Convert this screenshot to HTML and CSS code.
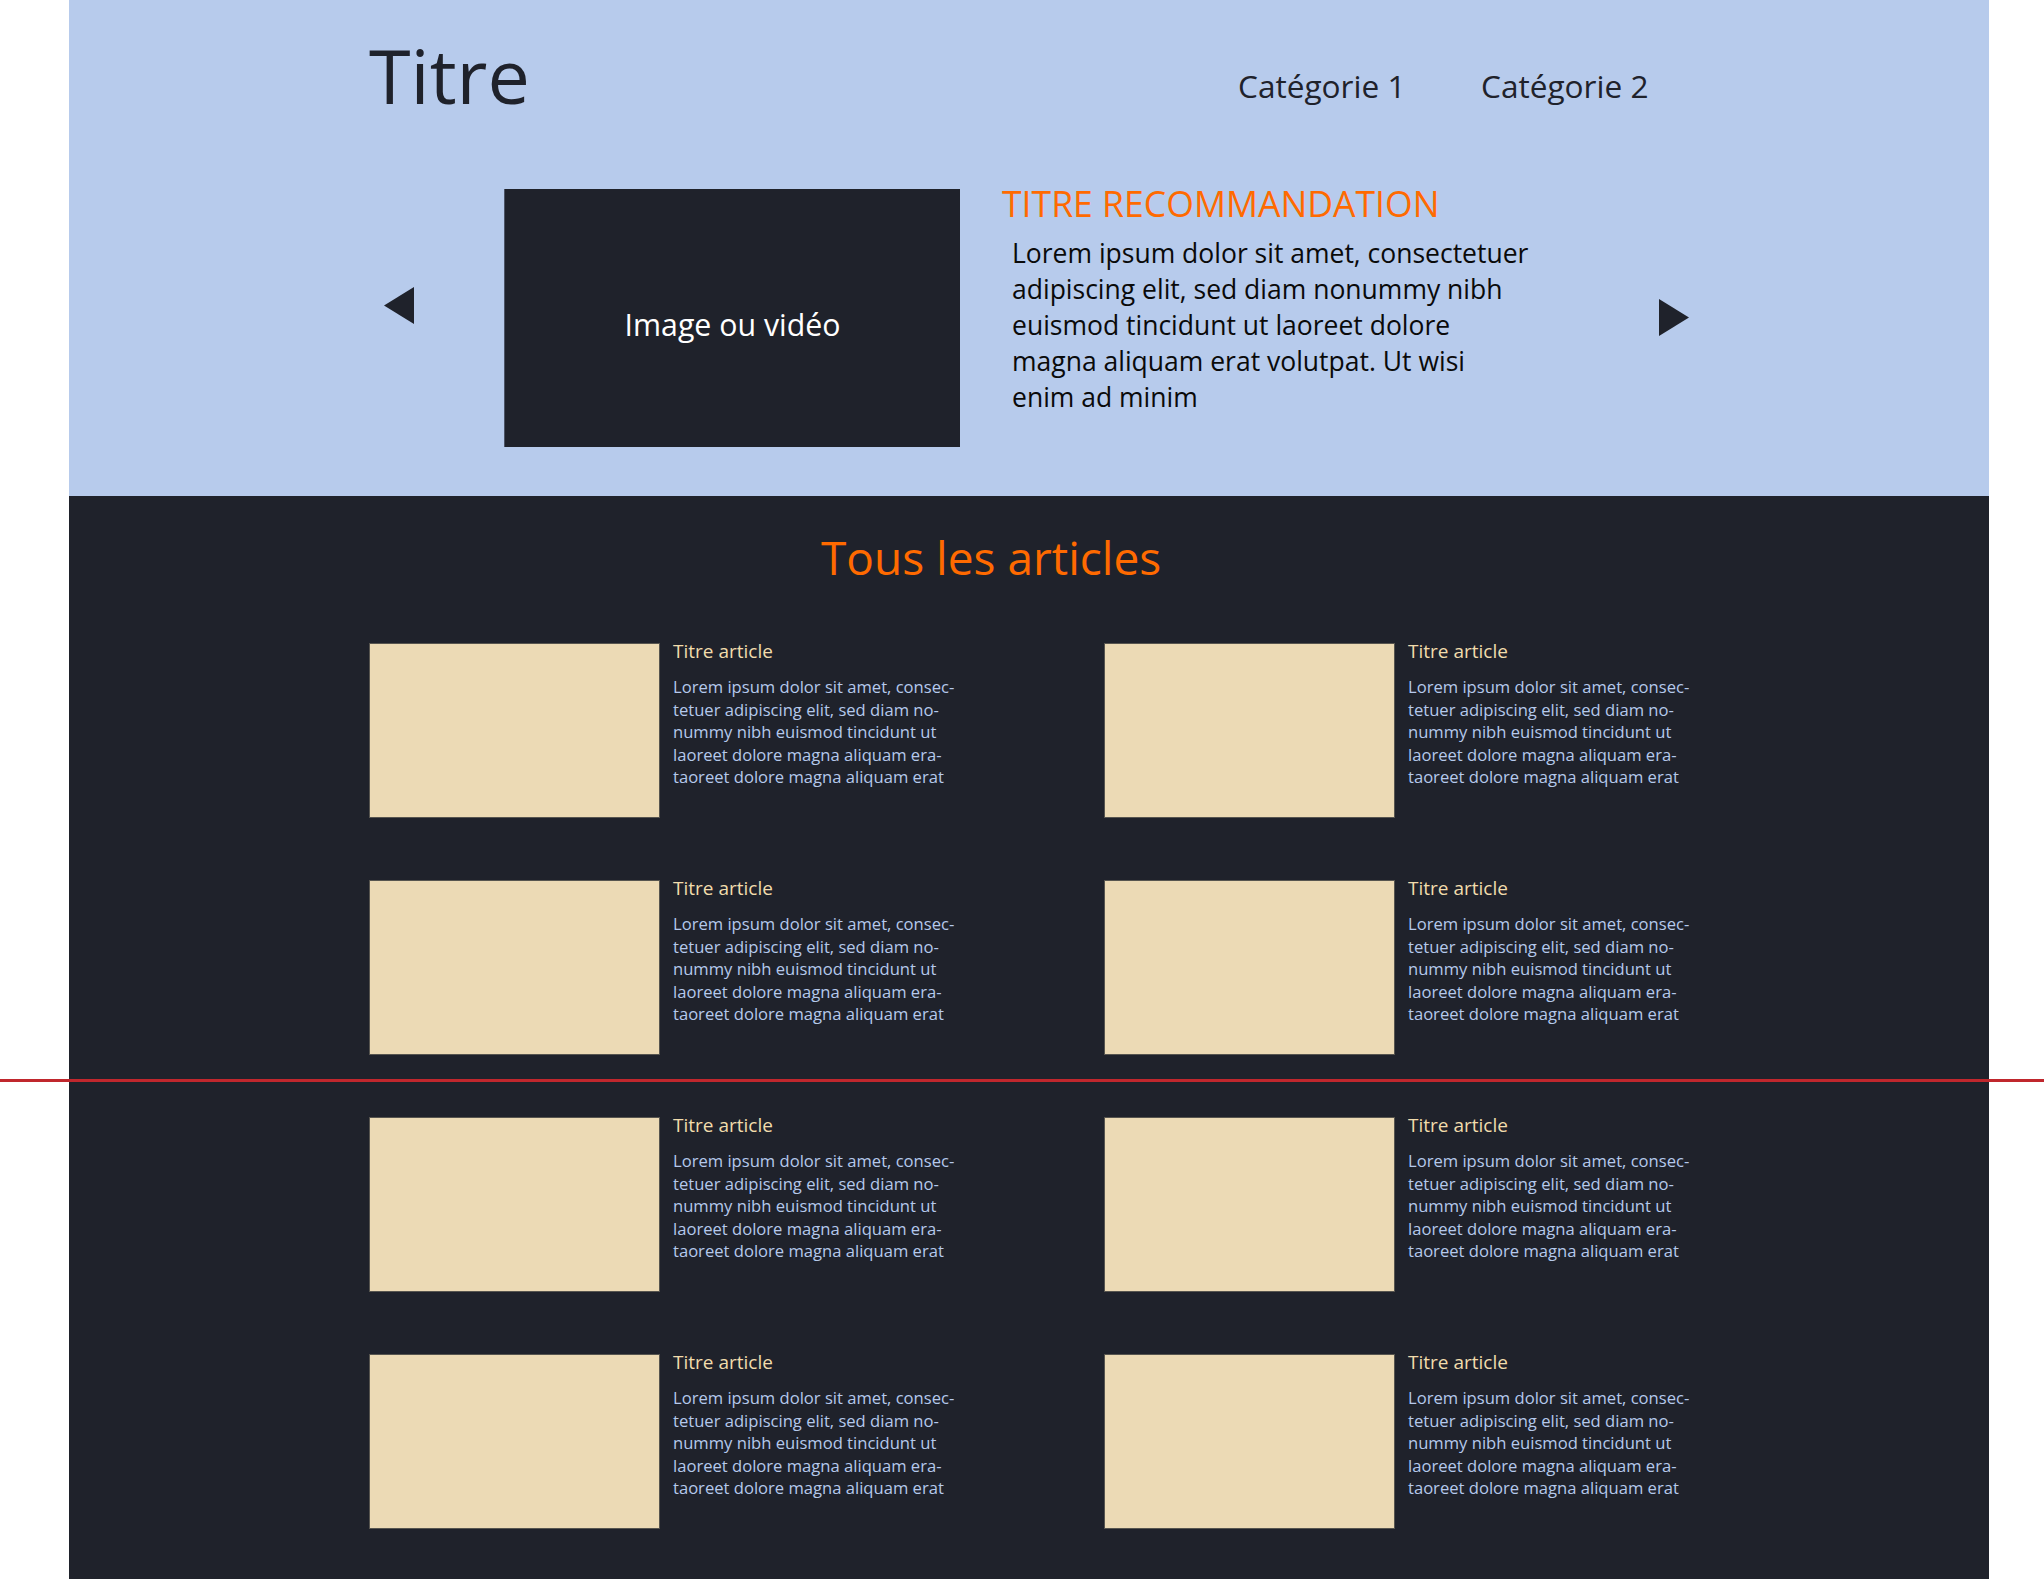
FILE: index.html
```html
<!DOCTYPE html>
<html lang="fr">
<head>
<meta charset="utf-8">
<title>Titre</title>
<link rel="stylesheet" href="styles.css">
</head>
<body>
<div class="page">
  <header class="hero">
    <div class="topbar">
      <h1 class="brand">Titre</h1>
      <nav class="nav">
        <a class="nav-link" href="#">Catégorie 1</a>
        <a class="nav-link" href="#">Catégorie 2</a>
      </nav>
    </div>
    <div class="carousel">
      <button class="arrow arrow-left" aria-label="Précédent">
        <svg width="30" height="37" viewBox="0 0 30 37"><polygon points="0,18.5 30,0 30,37" fill="#1f222b"/></svg>
      </button>
      <div class="media">Image ou vidéo</div>
      <div class="reco">
        <h2 class="reco-title">TITRE RECOMMANDATION</h2>
        <p class="reco-text">Lorem ipsum dolor sit amet, consectetuer<br>adipiscing elit, sed diam nonummy nibh<br>euismod tincidunt ut laoreet dolore<br>magna aliquam erat volutpat. Ut wisi<br>enim ad minim</p>
      </div>
      <button class="arrow arrow-right" aria-label="Suivant">
        <svg width="30" height="37" viewBox="0 0 30 37"><polygon points="0,0 30,18.5 0,37" fill="#1f222b"/></svg>
      </button>
    </div>
  </header>
  <main class="articles">
    <h2 class="section-title">Tous les articles</h2>
    <div class="grid">
      <article class="card"><div class="thumb"></div><div class="card-body"><h3 class="card-title">Titre article</h3><p class="card-text">Lorem ipsum dolor sit amet, consec-<br>tetuer adipiscing elit, sed diam no-<br>nummy nibh euismod tincidunt ut<br>laoreet dolore magna aliquam era-<br>taoreet dolore magna aliquam erat</p></div></article>
      <article class="card"><div class="thumb"></div><div class="card-body"><h3 class="card-title">Titre article</h3><p class="card-text">Lorem ipsum dolor sit amet, consec-<br>tetuer adipiscing elit, sed diam no-<br>nummy nibh euismod tincidunt ut<br>laoreet dolore magna aliquam era-<br>taoreet dolore magna aliquam erat</p></div></article>
      <article class="card"><div class="thumb"></div><div class="card-body"><h3 class="card-title">Titre article</h3><p class="card-text">Lorem ipsum dolor sit amet, consec-<br>tetuer adipiscing elit, sed diam no-<br>nummy nibh euismod tincidunt ut<br>laoreet dolore magna aliquam era-<br>taoreet dolore magna aliquam erat</p></div></article>
      <article class="card"><div class="thumb"></div><div class="card-body"><h3 class="card-title">Titre article</h3><p class="card-text">Lorem ipsum dolor sit amet, consec-<br>tetuer adipiscing elit, sed diam no-<br>nummy nibh euismod tincidunt ut<br>laoreet dolore magna aliquam era-<br>taoreet dolore magna aliquam erat</p></div></article>
      <article class="card"><div class="thumb"></div><div class="card-body"><h3 class="card-title">Titre article</h3><p class="card-text">Lorem ipsum dolor sit amet, consec-<br>tetuer adipiscing elit, sed diam no-<br>nummy nibh euismod tincidunt ut<br>laoreet dolore magna aliquam era-<br>taoreet dolore magna aliquam erat</p></div></article>
      <article class="card"><div class="thumb"></div><div class="card-body"><h3 class="card-title">Titre article</h3><p class="card-text">Lorem ipsum dolor sit amet, consec-<br>tetuer adipiscing elit, sed diam no-<br>nummy nibh euismod tincidunt ut<br>laoreet dolore magna aliquam era-<br>taoreet dolore magna aliquam erat</p></div></article>
      <article class="card"><div class="thumb"></div><div class="card-body"><h3 class="card-title">Titre article</h3><p class="card-text">Lorem ipsum dolor sit amet, consec-<br>tetuer adipiscing elit, sed diam no-<br>nummy nibh euismod tincidunt ut<br>laoreet dolore magna aliquam era-<br>taoreet dolore magna aliquam erat</p></div></article>
      <article class="card"><div class="thumb"></div><div class="card-body"><h3 class="card-title">Titre article</h3><p class="card-text">Lorem ipsum dolor sit amet, consec-<br>tetuer adipiscing elit, sed diam no-<br>nummy nibh euismod tincidunt ut<br>laoreet dolore magna aliquam era-<br>taoreet dolore magna aliquam erat</p></div></article>
    </div>
  </main>
</div>
<div class="fold-line"></div>
</body>
</html>
```

FILE: styles.css
```css
* { box-sizing: border-box; }
html, body { margin: 0; padding: 0; background: #ffffff; }
body {
  font-family: "Open Sans", "Noto Sans", "Liberation Sans", sans-serif;
  height: 1579px;
  overflow: hidden;
  position: relative;
}
.page {
  margin-left: 69px;
  width: 1920px;
  min-height: 1579px;
  background: #1f222b;
}
.hero {
  background: #b7cbec;
  height: 496px;
}
.topbar {
  display: flex;
  align-items: flex-start;
  height: 189px;
  padding: 37px 0 0 300px;
}
.brand {
  margin: 0;
  flex: 0 0 869px;
  font-size: 75.5px;
  line-height: 1;
  font-weight: 400;
  color: #1f222b;
}
.nav {
  display: flex;
  margin-top: 33px;
}
.nav-link {
  display: block;
  width: 243px;
  font-size: 31.6px;
  line-height: 1;
  color: #1f222b;
  text-decoration: none;
}
.carousel {
  display: flex;
  align-items: flex-start;
  padding: 0 300px 0 315px;
}
.arrow {
  display: block;
  border: 0;
  padding: 0;
  margin: 0;
  background: none;
  line-height: 0;
  cursor: pointer;
}
.arrow svg { display: block; }
.arrow-left { margin-top: 98px; }
.arrow-right { margin-top: 110px; margin-left: auto; }
.media {
  margin-left: 90px;
  width: 456px;
  height: 258px;
  background: #1f222b;
  border-left: 1px solid #4c5466;
  display: flex;
  align-items: center;
  justify-content: center;
  padding-top: 12px;
  color: #ffffff;
  font-size: 30.3px;
}
.reco { margin-left: 42px; }
.reco-title {
  margin: 0;
  font-size: 35.6px;
  line-height: 29px;
  font-weight: 400;
  color: #ff6a00;
}
.reco-text {
  margin: 16.5px 0 0 10px;
  font-size: 26.5px;
  line-height: 36px;
  color: #0a0a0a;
}
.articles {
  padding-top: 38px;
}
.section-title {
  margin: 0 0 63px 752px;
  font-size: 46px;
  line-height: 1;
  font-weight: 400;
  color: #ff6a00;
}
.grid {
  display: grid;
  grid-template-columns: 735px 735px;
  row-gap: 62px;
  padding-left: 300px;
}
.card {
  display: flex;
  align-items: flex-start;
}
.thumb {
  flex: 0 0 291px;
  height: 175px;
  background: #ecdab5;
  border: 1px solid #57554f;
}
.card-body { margin-left: 13px; }
.card-title {
  margin: 0;
  font-size: 19px;
  line-height: 17px;
  font-weight: 400;
  color: #f1dcac;
}
.card-text {
  margin: 16px 0 0;
  font-size: 16.6px;
  line-height: 22.5px;
  color: #b5c9eb;
}
.fold-line {
  position: absolute;
  left: 0;
  top: 1079px;
  width: 2044px;
  height: 3px;
  background: #c0272d;
}
```
